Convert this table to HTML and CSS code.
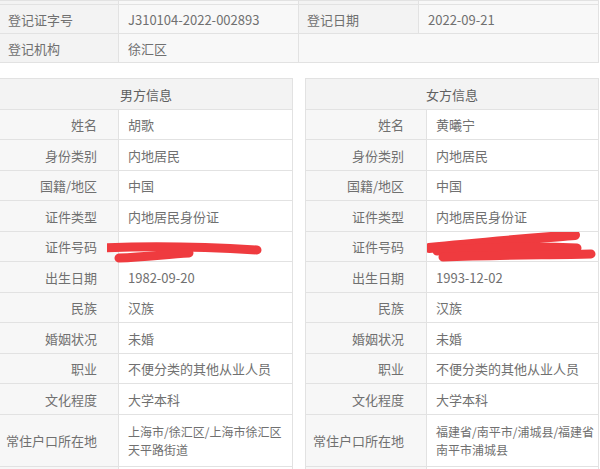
FILE: index.html
```html
<!DOCTYPE html>
<html lang="zh-CN">
<head>
<meta charset="utf-8">
<link rel="stylesheet" href="styles.css">
</head>
<body>
<table class="reg">
  <colgroup><col class="c1"><col class="c2"><col class="c3"><col class="c4"></colgroup>
  <tr class="stub"><td class="lab"></td><td class="val"></td><td class="lab"></td><td class="val"></td></tr>
  <tr><td class="lab">登记证字号</td><td class="val">J310104-2022-002893</td><td class="lab">登记日期</td><td class="val">2022-09-21</td></tr>
  <tr><td class="lab">登记机构</td><td class="val">徐汇区</td><td class="val" colspan="2"></td></tr>
</table>

<div class="panels">
  <table class="person male">
    <colgroup><col class="pl"><col></colgroup>
    <tr><th colspan="2" class="head">男方信息</th></tr>
    <tr><td class="k">姓名</td><td class="v">胡歌</td></tr>
    <tr><td class="k">身份类别</td><td class="v">内地居民</td></tr>
    <tr><td class="k">国籍/地区</td><td class="v">中国</td></tr>
    <tr><td class="k">证件类型</td><td class="v">内地居民身份证</td></tr>
    <tr><td class="k">证件号码</td><td class="v redact">
      <svg class="scribble" width="190" height="24" viewBox="0 0 190 24">
        <path d="M-6 8 C40 6 100 7 150 10" stroke="#ef3b3f" stroke-width="9" stroke-linecap="round" fill="none"/>
        <path d="M12 18 C40 17 60 14 82 13" stroke="#ef3b3f" stroke-width="9" stroke-linecap="round" fill="none"/>
      </svg>
    </td></tr>
    <tr><td class="k">出生日期</td><td class="v">1982-09-20</td></tr>
    <tr><td class="k">民族</td><td class="v">汉族</td></tr>
    <tr><td class="k">婚姻状况</td><td class="v">未婚</td></tr>
    <tr><td class="k">职业</td><td class="v">不便分类的其他从业人员</td></tr>
    <tr><td class="k">文化程度</td><td class="v">大学本科</td></tr>
    <tr class="tall"><td class="k">常住户口所在地</td><td class="v addr">上海市/徐汇区/上海市徐汇区<br>天平路街道</td></tr>
    <tr class="stub"><td class="k"></td><td class="v"></td></tr>
  </table>

  <table class="person female">
    <colgroup><col class="pr"><col></colgroup>
    <tr><th colspan="2" class="head">女方信息</th></tr>
    <tr><td class="k">姓名</td><td class="v">黄曦宁</td></tr>
    <tr><td class="k">身份类别</td><td class="v">内地居民</td></tr>
    <tr><td class="k">国籍/地区</td><td class="v">中国</td></tr>
    <tr><td class="k">证件类型</td><td class="v">内地居民身份证</td></tr>
    <tr><td class="k">证件号码</td><td class="v redact">
      <svg class="scribble" width="180" height="32" viewBox="0 0 180 32">
        <path d="M2 16 C50 11 100 7 148 3" stroke="#ef3b3f" stroke-width="10" stroke-linecap="round" fill="none"/>
        <path d="M10 19 C60 15 110 14 150 16" stroke="#ef3b3f" stroke-width="9" stroke-linecap="round" fill="none"/>
        <path d="M16 25 C70 23 120 23 164 22" stroke="#ef3b3f" stroke-width="9" stroke-linecap="round" fill="none"/>
      </svg>
    </td></tr>
    <tr><td class="k">出生日期</td><td class="v">1993-12-02</td></tr>
    <tr><td class="k">民族</td><td class="v">汉族</td></tr>
    <tr><td class="k">婚姻状况</td><td class="v">未婚</td></tr>
    <tr><td class="k">职业</td><td class="v">不便分类的其他从业人员</td></tr>
    <tr><td class="k">文化程度</td><td class="v">大学本科</td></tr>
    <tr class="tall"><td class="k">常住户口所在地</td><td class="v addr">福建省/南平市/浦城县/福建省<br>南平市浦城县</td></tr>
    <tr class="stub"><td class="k"></td><td class="v"></td></tr>
  </table>
</div>
</body>
</html>
```

FILE: styles.css
```css
html, body {
  margin: 0;
  padding: 0;
  background: #ffffff;
  overflow: hidden;
}
body {
  width: 600px;
  height: 469px;
  font-family: "Noto Sans CJK SC", "Noto Sans", sans-serif;
  font-size: 13px;
  color: #707070;
}
table {
  border-collapse: collapse;
  table-layout: fixed;
}
td, th {
  border: 1px solid #e2e2e2;
  padding: 0;
  white-space: nowrap;
  overflow: visible;
}

/* top registration table */
.reg {
  width: 599px;
  margin-left: -1px;
}
.reg .c1 { width: 119px; }
.reg .c2 { width: 180px; }
.reg .c3 { width: 120px; }
.reg .c4 { width: 180px; }
.reg tr { height: 29px; }
.reg tr.stub { height: 4px; }
.reg tr.stub td { height: 3px; }
.reg .lab {
  background: #f3f3f3;
  padding-left: 8px;
  color: #707070;
}
.reg .val {
  background: #f8f8f8;
  padding-left: 9px;
  color: #707070;
}

/* person panels */
.panels {
  display: flex;
  gap: 12px;
  margin-top: 15px;
}
.person {
  width: 294px;
}
.male { margin-left: -1px; }
.person .pl { width: 119px; }
.person .pr { width: 121px; }
.person tr { height: 30px; }
.person tr:nth-child(odd) { height: 31px; }
.person .head {
  height: 29px;
  background: #f3f3f3;
  font-weight: normal;
  color: #606060;
  text-align: center;
}
.person .k {
  background: #f7f7f7;
  text-align: right;
  padding-right: 21px;
  color: #707070;
}
.female .k { padding-right: 22px; }
.person .v {
  background: #ffffff;
  padding-left: 9px;
  color: #707070;
}
.person tr.tall { height: 52px; }
.person .addr {
  font-size: 12px;
  line-height: 18px;
}
.person tr.stub { height: 10px; }
.redact {
  position: relative;
}
.scribble {
  position: absolute;
  left: -12px;
  top: 8px;
}
.female .scribble {
  left: 0px;
  top: 0px;
}
```
